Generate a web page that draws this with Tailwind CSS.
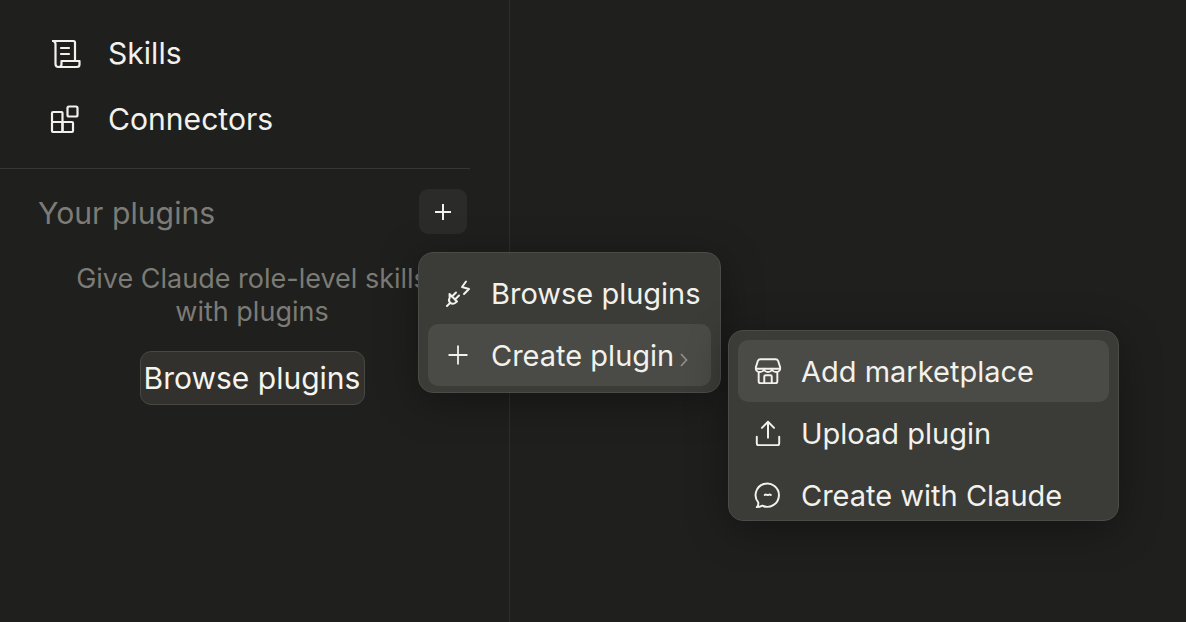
<!DOCTYPE html>
<html lang="en">
<head>
    <meta charset="utf8" />
    <script src="https://cdn.jsdelivr.net/npm/@tailwindcss/browser@4"></script>
    <title>Plugins</title>
</head>
<body class="bg-[#1f1f1e] font-['Inter',sans-serif] antialiased overflow-hidden">
    <main class="relative w-[1186px] h-[622px] overflow-hidden flex">
        <!-- Sidebar -->
        <aside class="w-[510px] h-full shrink-0 border-r border-[#2e2e2c]">
            <div class="w-[470px]">
                <nav class="pt-[20px] pl-[48px] pb-[16px] border-b border-[#363634] text-[#f2f1ec] text-[30.1px] leading-[36px]">
                    <div class="h-[66px] flex items-center gap-[26px]">
                        <svg class="w-[34px] h-[34px]" viewBox="0 0 34 34" fill="none" stroke="currentColor" stroke-width="2.2" stroke-linecap="round" stroke-linejoin="round">
                            <path d="M5 5h20.500c1 0 1.500.8 1.500 1.700V25" />
                            <path d="M5 5c1.600.3 2.500 1.300 2.500 3v20c0 1.700 1.100 3 3 3h18.500c1.500 0 2.500-1 2.500-2.500V25H13.500v3.500c0 1.500-1 2.500-3 2.500" />
                            <path d="M13 12h8M13 18h8" />
                        </svg>
                        <span>Skills</span>
                    </div>
                    <div class="h-[66px] flex items-center gap-[26px]">
                        <svg class="w-[34px] h-[34px]" viewBox="0 0 34 34" fill="none" stroke="currentColor" stroke-width="2.200" stroke-linejoin="round">
                            <rect x="4" y="10" width="10.500" height="10" rx="1" />
                            <rect x="4" y="20" width="10.500" height="10" rx="1" />
                            <rect x="14.500" y="20" width="10.500" height="10" rx="1" />
                            <rect x="19.500" y="4.500" width="10" height="10" rx="1.500" />
                        </svg>
                        <span>Connectors</span>
                    </div>
                </nav>

                <div class="flex items-center justify-between pl-[38px] pr-[3px] pt-[20px]">
                    <span class="pt-[2px] text-[30.2px] leading-[36px] text-[#7c7b75]">Your plugins</span>
                    <button class="w-[48px] h-[45px] rounded-[9px] bg-[#2b2b29] flex items-center justify-center text-[#f2f1ec]">
                        <svg class="w-[18px] h-[18px]" viewBox="0 0 18 18" fill="none" stroke="currentColor" stroke-width="2">
                            <path d="M9 1v16M1 9h16" />
                        </svg>
                    </button>
                </div>

                <div class="flex flex-col items-center pl-[34px] mt-[28px]">
                    <p class="text-[27px] leading-[33px] text-center text-[#7c7b75] whitespace-nowrap">Give Claude role-level skills<br />with plugins</p>
                    <button class="mt-[23px] w-[225px] h-[54px] rounded-[11px] border border-[#484845] bg-[#32312e] text-[#f5f4ef] text-[30px] whitespace-nowrap flex items-center justify-center">Browse plugins</button>
                </div>
            </div>
        </aside>

        <!-- First menu -->
        <div class="absolute left-[418px] top-[252px] w-[303px] h-[141px] p-[9px] rounded-[15px] bg-[#3b3b37] border border-[#4b4b47] shadow-[0_8px_40px_rgba(0,0,0,0.35)] text-[#f2f1ec] text-[29px]">
            <div class="h-[62px] flex items-center pl-[16px] gap-[19px] whitespace-nowrap">
                <svg class="w-[28px] h-[28px] shrink-0" viewBox="0 0 28 28" fill="none" stroke="currentColor" stroke-width="2" stroke-linecap="round" stroke-linejoin="round">
                    <path d="M3 27l3-3" />
                    <path d="M5.500 15l7.500 7.500-2 1.500c-1.500 1-3.500 1-4.800-.3s-1.500-3.300-.5-4.700z" />
                    <path d="M8 17.500l4-4M11 20.500l4-4" />
                    <path d="M22 2.500L18 8l7 2-5 5" />
                </svg>
                <span class="pt-[2px]">Browse plugins</span>
            </div>
            <div class="h-[62px] flex items-center pl-[16px] gap-[19px] rounded-[10px] bg-[#4a4a46] whitespace-nowrap">
                <svg class="w-[28px] h-[28px] shrink-0" viewBox="0 0 28 28" fill="none" stroke="currentColor" stroke-width="1.800">
                    <path d="M14 4.500v19M4.500 14h19" />
                </svg>
                <span class="pt-[2px]">Create plugin</span>
                <svg class="w-[10px] h-[16px] -ml-[14px] mt-[9px] text-[#8e8d87]" viewBox="0 0 10 16" fill="none" stroke="currentColor" stroke-width="1.800">
                    <path d="M2 2l5.500 6L2 14" />
                </svg>
            </div>
        </div>

        <!-- Submenu -->
        <div class="absolute left-[728px] top-[330px] w-[391px] h-[191px] rounded-[15px] bg-[#3b3b37] border border-[#4b4b47] shadow-[0_8px_40px_rgba(0,0,0,0.35)] overflow-hidden text-[#f2f1ec] text-[29px]">
            <div class="p-[9px]">
                <div class="h-[62px] flex items-center pl-[16px] gap-[19px] rounded-[10px] bg-[#4a4a46]">
                    <svg class="w-[28px] h-[28px] shrink-0" viewBox="0 0 30 30" fill="none" stroke="currentColor" stroke-width="2.100" stroke-linejoin="round">
                        <path d="M7 2.500h16c1.500 0 2.500.8 3 2l2 6.500v1.500H2V11l2-6.500c.5-1.200 1.500-2 3-2z" />
                        <path d="M2 12.500c0 2 2 3.500 4.300 3.500s4.400-1.500 4.400-3.500c0 2 2 3.500 4.300 3.500s4.300-1.500 4.300-3.500c0 2 2.100 3.500 4.400 3.500s4.300-1.500 4.300-3.500" />
                        <path d="M5 16v10c0 1 .8 2 2 2h16c1.200 0 2-1 2-2V16" />
                        <path d="M11 28v-7c0-.8.600-1.500 1.500-1.500h5c.9 0 1.500.7 1.500 1.500v7" />
                    </svg>
                    <span class="pt-[2px]">Add marketplace</span>
                </div>
                <div class="h-[62px] flex items-center pl-[16px] gap-[19px]">
                    <svg class="w-[28px] h-[28px] shrink-0" viewBox="0 0 30 30" fill="none" stroke="currentColor" stroke-width="2.100" stroke-linecap="round" stroke-linejoin="round">
                        <path d="M15 20V3M8.500 9.500L15 3l6.500 6.500" />
                        <path d="M3 19v7c0 1 .8 2 2 2h20c1.200 0 2-1 2-2v-7" />
                    </svg>
                    <span class="pt-[2px]">Upload plugin</span>
                </div>
                <div class="h-[62px] flex items-center pl-[16px] gap-[19px]">
                    <svg class="w-[28px] h-[28px] shrink-0" viewBox="0 0 30 30" fill="none" stroke="currentColor" stroke-width="2.100" stroke-linecap="round" stroke-linejoin="round">
                        <path d="M3 28c1.500-1.500 2-3 1.500-5A12.500 12.500 0 1 1 9 26.500c-2 1-4 1.500-6 1.500z" />
                        <path d="M11.500 15c.8-.8 1.500-.8 2.200-.3s1.300.5 2 0 1.500-.5 2.300.3" />
                    </svg>
                    <span class="pt-[2px]">Create with Claude</span>
                </div>
            </div>
        </div>
    </main>
</body>
</html>
